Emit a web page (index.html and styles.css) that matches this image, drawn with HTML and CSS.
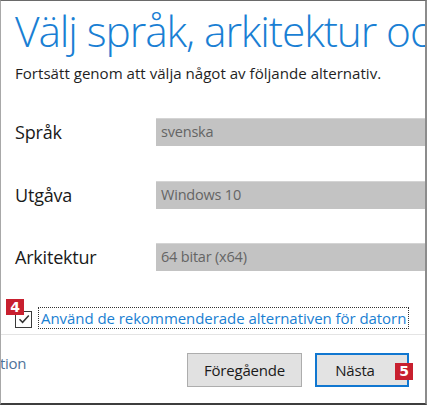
FILE: index.html
```html
<!DOCTYPE html>
<html lang="sv">
<head>
<meta charset="utf-8">
<link rel="stylesheet" href="styles.css">
</head>
<body>
<div class="window">
  <div class="content">
    <h1 class="title">Välj språk, arkitektur och utgåva</h1>
    <p class="subtitle">Fortsätt genom att välja något av följande alternativ.</p>
    <div class="form">
      <div class="label">Språk</div>
      <div class="field">svenska</div>
      <div class="label">Utgåva</div>
      <div class="field">Windows 10</div>
      <div class="label">Arkitektur</div>
      <div class="field">64 bitar (x64)</div>
    </div>
    <div class="check-row">
      <span class="badge badge-4">4</span>
      <span class="checkbox">
        <svg width="14" height="14" viewBox="0 0 14 14"><path d="M2.5 7.2 L5.6 10.3 L11.8 3.6" fill="none" stroke="#333" stroke-width="1.5"/></svg>
      </span>
      <span class="check-label">Använd de rekommenderade alternativen för datorn</span>
    </div>
  </div>
  <div class="footer">
    <span class="link">tion</span>
    <div class="buttons">
      <button class="btn">Föregående</button>
      <button class="btn btn-primary">Nästa</button>
      <span class="badge badge-5">5</span>
    </div>
  </div>
</div>
</body>
</html>
```

FILE: styles.css
```css
* { box-sizing: border-box; }
html, body { margin: 0; padding: 0; background: #fff; }
body { width: 428px; height: 405px; overflow: hidden; font-family: "Open Sans", "Noto Sans", sans-serif; }

.window {
  position: relative;
  width: 427px;
  height: 405px;
  border-top: 1px solid #6a6a6a;
  border-left: 1px solid #a8a8a8;
  border-right: 2px solid #8c8c8c;
  border-bottom: 2px solid #3e3e3e;
  display: flex;
  flex-direction: column;
  overflow: hidden;
}

.content {
  position: relative;
  padding-left: 14px;
  height: 334px;
  border-bottom: 1px solid #e4e4e4;
  overflow: hidden;
}

.title {
  margin: 4px 0 0 0;
  font-weight: 300;
  font-size: 42.5px;
  line-height: 52px;
  color: #1a7fd4;
  white-space: nowrap;
  letter-spacing: -1.1px;
}

.subtitle {
  margin: 6px 0 0 0;
  font-size: 15.1px;
  line-height: 20px;
  color: #1f1f1f;
  white-space: nowrap;
  letter-spacing: 0;
}

.form {
  margin-top: 35px;
  display: grid;
  grid-template-columns: 141px 280px;
  grid-auto-rows: 28px;
  row-gap: 34.5px;
  align-items: center;
}

.label {
  font-size: 18px;
  color: #1a1a1a;
  line-height: 28px;
  letter-spacing: -0.2px;
}

.field {
  height: 28px;
  background: #c3c3c3;
  border-top: 1px solid #d4d4d4;
  color: #656565;
  font-size: 14.5px;
  line-height: 26px;
  padding-left: 5px;
  letter-spacing: -0.2px;
}

.check-row {
  position: relative;
  margin-top: 36px;
  display: flex;
  align-items: center;
  gap: 6px;
  height: 22px;
}

.checkbox {
  width: 17px;
  height: 17px;
  border: 1px solid #3a3a3a;
  background: #fff;
  display: flex;
  align-items: center;
  justify-content: center;
  margin-top: 2px;
}

.check-label {
  color: #1a80d2;
  font-size: 15px;
  line-height: 20px;
  padding: 0 2px;
  border: 1px dotted #333;
  white-space: nowrap;
  letter-spacing: -0.05px;
}

.badge {
  position: absolute;
  background: #c8202f;
  color: #fff;
  font-family: "DejaVu Sans", sans-serif;
  font-weight: bold;
  font-size: 14px;
  line-height: 16px;
  text-align: center;
  width: 18px;
  height: 16px;
}

.badge-4 { left: -9px; top: -8px; }

.footer {
  flex: 1;
  position: relative;
  display: flex;
  align-items: flex-start;
  justify-content: space-between;
  padding-top: 18px;
}

.link {
  margin-left: -1px;
  margin-top: 0px;
  color: #4f7299;
  font-size: 15px;
  line-height: 20px;
  letter-spacing: -0.3px;
}

.buttons {
  position: relative;
  display: flex;
  gap: 13px;
  margin-right: 16px;
}

.btn {
  height: 34px;
  background: #e1e1e1;
  border: 1px solid #adadad;
  font-family: "Open Sans", "Noto Sans", sans-serif;
  font-size: 15px;
  color: #1a1a1a;
  padding: 0;
  width: 115px;
  letter-spacing: -0.2px;
}

.btn-primary {
  width: 94px;
  border: 2px solid #1177d0;
  background: #e3e3e3;
  padding-right: 14px;
}

.badge-5 { right: -4px; top: 10px; height: 17px; line-height: 17px; }
```
